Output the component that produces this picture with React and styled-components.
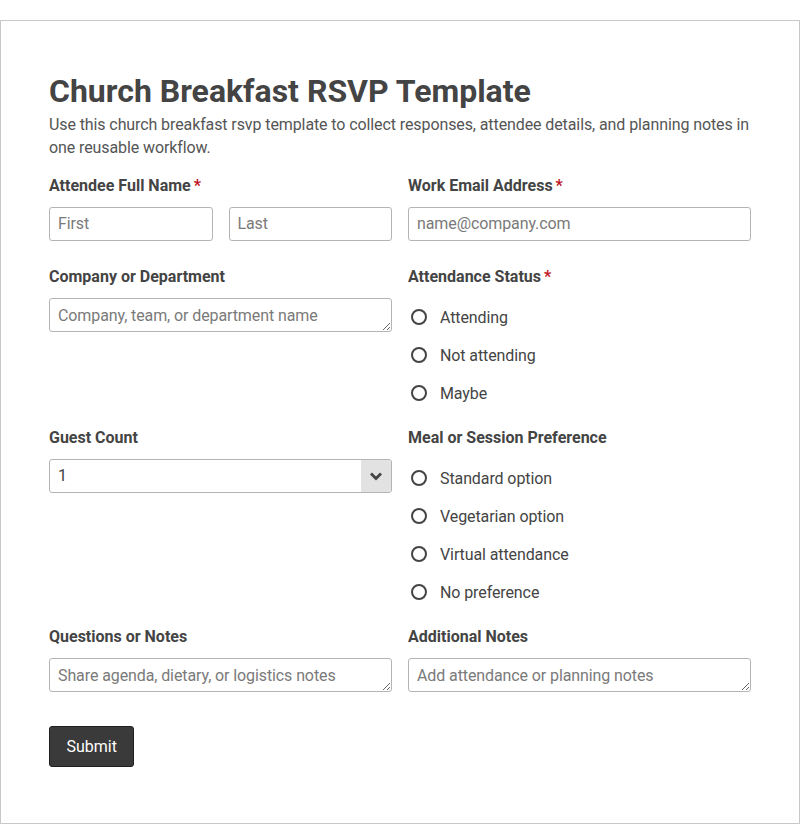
import React from "react";
import styled, { createGlobalStyle } from "styled-components";

const Global = createGlobalStyle`
  * { box-sizing: border-box; }
  html, body { margin: 0; padding: 0; background: #fff; }
  body { font-family: Roboto, "Noto Sans", Arial, sans-serif; color: #444; }
`;

const Page = styled.div`
  padding-top: 20px;
`;

const Card = styled.form`
  border: 1px solid #c8c8c8;
  padding: 51px 48px 56px;
  min-height: 804px;
`;

const Title = styled.h1`
  margin: 0 0 3px;
  font-size: 32px;
  line-height: 38px;
  font-weight: 700;
  color: #444;
`;

const Intro = styled.p`
  margin: 0 0 17px;
  font-size: 16px;
  line-height: 23px;
  letter-spacing: -0.1px;
  color: #555;
`;

const Grid = styled.div`
  display: grid;
  grid-template-columns: 1fr 1fr;
  column-gap: 16px;
  row-gap: 16px;
`;

const Field = styled.div`
  display: flex;
  flex-direction: column;
  min-width: 0;
`;

const Label = styled.div`
  font-size: 16px;
  line-height: 20px;
  font-weight: 700;
  color: #444;
  margin-bottom: 11px;
`;

const Req = styled.span`
  color: #c0141e;
  margin-left: 3px;
`;

const Pair = styled.div`
  display: grid;
  grid-template-columns: 1fr 1fr;
  gap: 16px;
  margin-bottom: 10px;
`;

const controlCss = `
  width: 100%;
  height: 34px;
  border: 1px solid #b4b4b4;
  border-radius: 3px;
  padding: 0 8px 1px;
  font-family: Roboto, "Noto Sans", Arial, sans-serif;
  font-size: 16px;
  letter-spacing: -0.1px;
  color: #444;
  background: #fff;
  outline: none;
  &::placeholder { color: #7a7a7a; }
`;

const TextInput = styled.input`
  ${controlCss}
  margin-bottom: ${(p) => (p.$flush ? "0" : "10px")};
`;

const TextArea = styled.textarea`
  ${controlCss}
  display: block;
  padding: 7px 8px 5px;
  line-height: 20px;
  resize: vertical;
  min-height: 34px;
  margin-bottom: 10px;
`;

const SelectWrap = styled.div`
  position: relative;
  height: 34px;
  margin-bottom: 10px;
`;

const Select = styled.select`
  ${controlCss}
  appearance: none;
  -webkit-appearance: none;
  padding-right: 40px;
`;

const Arrow = styled.span`
  position: absolute;
  top: 1px;
  right: 1px;
  bottom: 1px;
  width: 30px;
  background: #e2e2e2;
  border-radius: 0 2px 2px 0;
  display: flex;
  align-items: center;
  justify-content: center;
  pointer-events: none;
`;

const RadioList = styled.div`
  display: flex;
  flex-direction: column;
`;

const RadioRow = styled.label`
  display: flex;
  align-items: center;
  height: 38px;
  font-size: 16px;
  letter-spacing: -0.1px;
  color: #444;
  gap: 13px;
  padding-left: 3px;
`;

const Circle = styled.span`
  width: 16px;
  height: 16px;
  border: 2px solid #444;
  border-radius: 50%;
  flex: none;
`;

const Button = styled.button`
  margin-top: 24px;
  height: 41px;
  padding: 0 16.5px;
  background: #3a3a3a;
  border: 1px solid #1f1f1f;
  border-radius: 3px;
  color: #fff;
  font-family: Roboto, "Noto Sans", Arial, sans-serif;
  font-size: 16px;
`;

const Radio = ({ children }) => (
  <RadioRow>
    <Circle />
    {children}
  </RadioRow>
);

export default function App() {
  return (
    <Page>
      <Global />
      <Card onSubmit={(e) => e.preventDefault()}>
        <Title>Church Breakfast RSVP Template</Title>
        <Intro>
          Use this church breakfast rsvp template to collect responses, attendee details, and planning notes in one reusable workflow.
        </Intro>
        <Grid>
          <Field>
            <Label>
              Attendee Full Name<Req>*</Req>
            </Label>
            <Pair>
              <TextInput $flush placeholder="First" />
              <TextInput $flush placeholder="Last" />
            </Pair>
          </Field>
          <Field>
            <Label>
              Work Email Address<Req>*</Req>
            </Label>
            <TextInput placeholder="name@company.com" />
          </Field>

          <Field>
            <Label>Company or Department</Label>
            <TextArea rows={1} placeholder="Company, team, or department name" />
          </Field>
          <Field>
            <Label>
              Attendance Status<Req>*</Req>
            </Label>
            <RadioList>
              <Radio>Attending</Radio>
              <Radio>Not attending</Radio>
              <Radio>Maybe</Radio>
            </RadioList>
          </Field>

          <Field>
            <Label>Guest Count</Label>
            <SelectWrap>
              <Select defaultValue="1">
                <option>1</option>
                <option>2</option>
                <option>3</option>
                <option>4</option>
              </Select>
              <Arrow>
                <svg width="14" height="10" viewBox="0 0 14 10">
                  <path d="M2 2.5 L7 7.5 L12 2.5" fill="none" stroke="#444" strokeWidth="2.8" />
                </svg>
              </Arrow>
            </SelectWrap>
          </Field>
          <Field>
            <Label>Meal or Session Preference</Label>
            <RadioList>
              <Radio>Standard option</Radio>
              <Radio>Vegetarian option</Radio>
              <Radio>Virtual attendance</Radio>
              <Radio>No preference</Radio>
            </RadioList>
          </Field>

          <Field>
            <Label>Questions or Notes</Label>
            <TextArea rows={1} placeholder="Share agenda, dietary, or logistics notes" />
          </Field>
          <Field>
            <Label>Additional Notes</Label>
            <TextArea rows={1} placeholder="Add attendance or planning notes" />
          </Field>
        </Grid>
        <Button type="submit">Submit</Button>
      </Card>
    </Page>
  );
}
